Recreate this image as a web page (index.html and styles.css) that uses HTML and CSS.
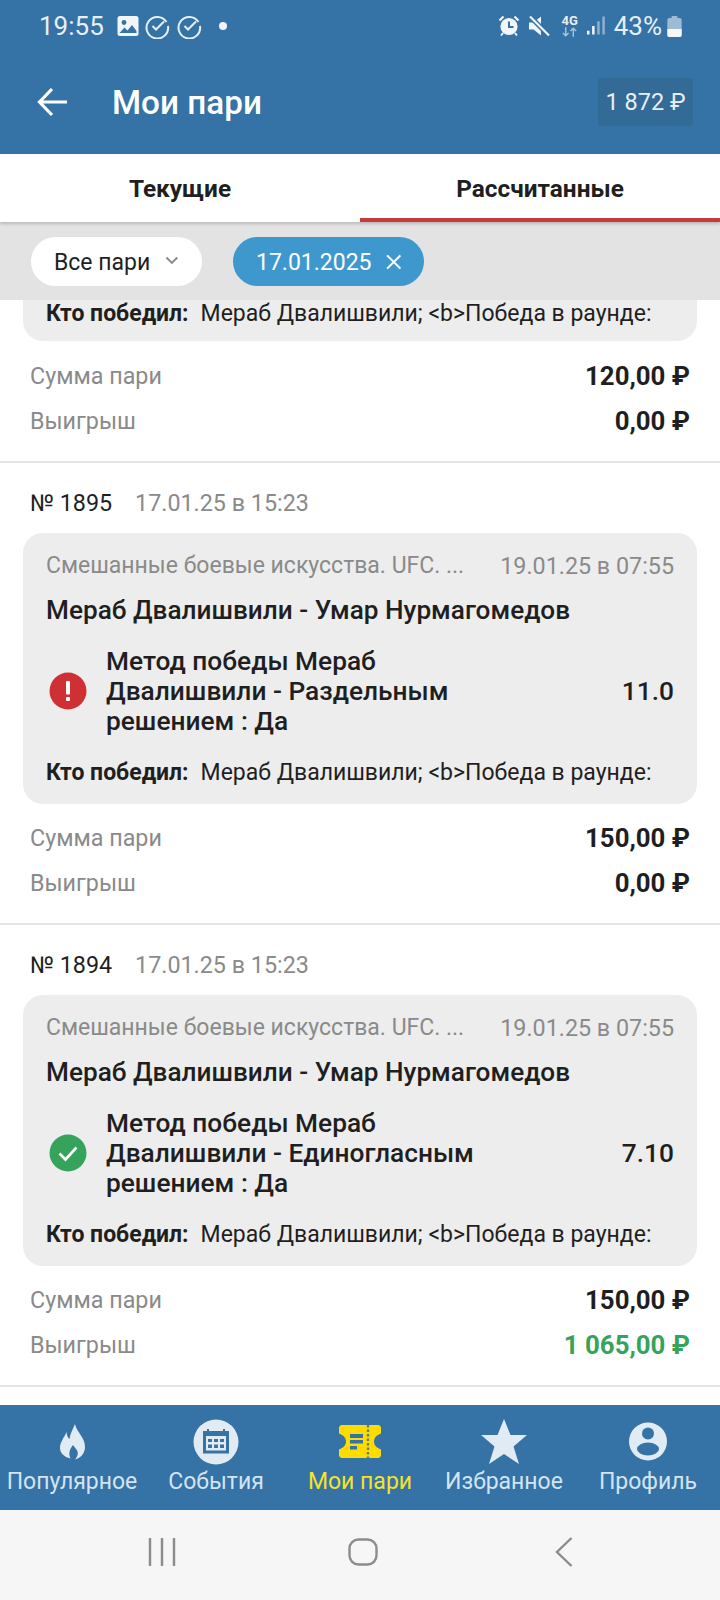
FILE: index.html
```html
<!DOCTYPE html>
<html lang="ru">
<head>
    <meta charset="UTF-8">
    <meta name="viewport" content="width=device-width, initial-scale=1.0">
    <title>Мои пари</title>
    <link rel="stylesheet" href="styles.css">
</head>
<body>
    <div class="app">
        <header class="top">
            <div class="status">
                <div class="status-left">
                    <span class="clock">19:55</span>
                    <svg class="st-pic" viewBox="0 0 22 22"><rect x="0.5" y="1" width="21" height="20" rx="2.5" fill="#f1f6fa"/><circle cx="7" cy="7.5" r="2.4" fill="#3572a5"/><path d="M2.5 18l5-5.5 3 3 4.5-5.5 4.5 6v2z" fill="#3572a5"/></svg>
                    <svg class="st-check" viewBox="0 0 26 26"><path d="M22.5 9A10.8 10.8 0 1 0 24 13" fill="none" stroke="#e6eff6" stroke-width="2"/><path d="M8.5 13l3.5 3.5 8-8" fill="none" stroke="#e6eff6" stroke-width="2"/></svg>
                    <svg class="st-check" viewBox="0 0 26 26"><path d="M22.5 9A10.8 10.8 0 1 0 24 13" fill="none" stroke="#e6eff6" stroke-width="2"/><path d="M8.5 13l3.5 3.5 8-8" fill="none" stroke="#e6eff6" stroke-width="2"/></svg>
                    <span class="st-dot"></span>
                </div>
                <div class="status-right">
                    <svg class="st-alarm" viewBox="0 0 22 22"><path d="M1.500 5.500l4-4M20.500 5.500l-4-4" stroke="#f1f6fa" stroke-width="2.200" fill="none"/><path d="M5 18l-2 2.500M17 18l2 2.500" stroke="#f1f6fa" stroke-width="2" fill="none"/><circle cx="11" cy="11.500" r="8.600" fill="#f1f6fa"/><path d="M11 6.500v5.500h4.500" stroke="#3572a5" stroke-width="2" fill="none"/></svg>
                    <svg class="st-mute" viewBox="0 0 22 22"><path d="M1 7.500h4.500L13 1.500v19l-7.500-6H1z" fill="#f1f6fa"/><path d="M2 1.500l19 19" stroke="#3572a5" stroke-width="5"/><path d="M2 1.500l19 19" stroke="#f1f6fa" stroke-width="2.200"/></svg>
                    <span class="net">
                        <span class="net-label">4G</span>
                        <svg class="net-arrows" viewBox="0 0 18 10"><path d="M5 0v9M2 6l3 3 3-3" stroke="#a9c5db" stroke-width="1.500" fill="none"/><path d="M13 10V1M10 4l3-3 3 3" stroke="#a9c5db" stroke-width="1.500" fill="none"/></svg>
                    </span>
                    <svg class="st-signal" viewBox="0 0 19 20"><rect x="0" y="15" width="2.600" height="4" fill="#f1f6fa"/><rect x="5.400" y="10" width="2.600" height="9" fill="#f1f6fa"/><rect x="10.800" y="5" width="2.600" height="14" fill="#8fb2cd"/><rect x="16.200" y="0" width="2.600" height="19" fill="#8fb2cd"/></svg>
                    <span class="battery-text">43%</span>
                    <svg class="st-batt" viewBox="0 0 15 22"><path d="M4.500 0h6v2h2.500a2 2 0 0 1 2 2v16a2 2 0 0 1-2 2H2a2 2 0 0 1-2-2V4a2 2 0 0 1 2-2h2.500z" fill="#9dbcd4"/><path d="M0 13.500h15V20a2 2 0 0 1-2 2H2a2 2 0 0 1-2-2z" fill="#f4f8fb"/></svg>
                </div>
            </div>
            <div class="toolbar">
                <svg class="back" viewBox="0 0 32 30"><path d="M30 15H3M15 2L2.500 15 15 28" fill="none" stroke="#fff" stroke-width="3.200"/></svg>
                <h1 class="page-title">Мои пари</h1>
                <div class="balance">1 872 ₽</div>
            </div>
        </header>

        <nav class="tabs">
            <div class="tab">Текущие</div>
            <div class="tab tab-active">Рассчитанные</div>
        </nav>

        <div class="filters">
            <div class="chip chip-white">Все пари
                <svg class="chev" viewBox="0 0 14 9"><path d="M1.500 1.500L7 7l5.500-5.500" fill="none" stroke="#8a8a8a" stroke-width="2"/></svg>
            </div>
            <div class="chip chip-blue">17.01.2025
                <svg class="cross" viewBox="0 0 14 14"><path d="M1 1l12 12M13 1L1 13" fill="none" stroke="#fff" stroke-width="1.800"/></svg>
            </div>
        </div>

        <main class="list">
            <section class="bet bet-cut">
                <div class="card card-cut">
                    <p class="who"><b>Кто победил:</b>Мераб Двалишвили; &lt;b&gt;Победа в раунде:</p>
                </div>
                <div class="sums">
                    <div class="sum-row"><span>Сумма пари</span><b>120,00 ₽</b></div>
                    <div class="sum-row"><span>Выигрыш</span><b>0,00 ₽</b></div>
                </div>
            </section>

            <section class="bet">
                <div class="bet-head"><span class="bet-no">№ 1895</span><span class="bet-date">17.01.25 в 15:23</span></div>
                <div class="card">
                    <div class="card-meta"><span class="league">Смешанные боевые искусства. UFC. ...</span><span class="event-date">19.01.25 в 07:55</span></div>
                    <div class="card-title">Мераб Двалишвили - Умар Нурмагомедов</div>
                    <div class="pick">
                        <svg class="pick-icon" viewBox="0 0 38 38"><circle cx="19" cy="19" r="18.500" fill="#cf3033"/><rect x="17" y="9" width="4" height="13.500" rx="1" fill="#fff"/><rect x="17" y="25" width="4" height="4" rx="1" fill="#fff"/></svg>
                        <div class="pick-name">Метод победы Мераб Двалишвили - Раздельным решением : Да</div>
                        <div class="pick-odd">11.0</div>
                    </div>
                    <p class="who"><b>Кто победил:</b>Мераб Двалишвили; &lt;b&gt;Победа в раунде:</p>
                </div>
                <div class="sums">
                    <div class="sum-row"><span>Сумма пари</span><b>150,00 ₽</b></div>
                    <div class="sum-row"><span>Выигрыш</span><b>0,00 ₽</b></div>
                </div>
            </section>

            <section class="bet">
                <div class="bet-head"><span class="bet-no">№ 1894</span><span class="bet-date">17.01.25 в 15:23</span></div>
                <div class="card">
                    <div class="card-meta"><span class="league">Смешанные боевые искусства. UFC. ...</span><span class="event-date">19.01.25 в 07:55</span></div>
                    <div class="card-title">Мераб Двалишвили - Умар Нурмагомедов</div>
                    <div class="pick">
                        <svg class="pick-icon" viewBox="0 0 38 38"><circle cx="19" cy="19" r="18.500" fill="#35a35a"/><path d="M10.500 19.500l6 6 11-12" fill="none" stroke="#fff" stroke-width="2.600"/></svg>
                        <div class="pick-name">Метод победы Мераб Двалишвили - Единогласным решением : Да</div>
                        <div class="pick-odd">7.10</div>
                    </div>
                    <p class="who"><b>Кто победил:</b>Мераб Двалишвили; &lt;b&gt;Победа в раунде:</p>
                </div>
                <div class="sums">
                    <div class="sum-row"><span>Сумма пари</span><b>150,00 ₽</b></div>
                    <div class="sum-row"><span>Выигрыш</span><b class="won">1 065,00 ₽</b></div>
                </div>
            </section>
        </main>

        <nav class="bottom">
            <div class="nav-item">
                <svg class="nav-icon" viewBox="0 0 46 46"><path d="M26 5C28 14 36 18 36 28C36 34 32 39 26 40.500C29 37 30 33 27 30L24 26C21 30 19 34 21.500 39.500C15 38 11 34 11 29C11 23 15 19 17.500 13C18 17 19 19 20.500 20C21 15 24 10 26 5z" fill="#e1ebf4"/></svg>
                <span>Популярное</span>
            </div>
            <div class="nav-item">
                <svg class="nav-icon" viewBox="0 0 46 46"><circle cx="23" cy="23" r="22.500" fill="#e1ebf4"/><path d="M10 12h4v-2h2v2h14v-2h2v2h4v22.500H10z" fill="#3572a5"/><rect x="13" y="17" width="20" height="14.500" fill="#e1ebf4"/><path d="M15 20h4v3h-4zM21 20h4v3h-4zM27 20h4v3h-4zM15 25.500h4V29h-4zM21 25.500h4V29h-4zM27 25.500h4V29h-4z" fill="#3572a5"/></svg>
                <span>События</span>
            </div>
            <div class="nav-item nav-active">
                <svg class="nav-icon" viewBox="0 0 46 46"><path d="M4 6h38l2 2v6.500c-4.500 1.500-7 4.500-7 8s2.500 6.500 7 8V37l-2 2H4l-2-2v-6.500c4.500-1.500 7-4.500 7-8s-2.500-6.500-7-8V8z" fill="#ffdc00"/><path d="M13 15h13v4H13zM13 21h13v3.500H13zM13 27h7v3.500h-7z" fill="#3572a5"/><path d="M31 6v33" stroke="#5f7f80" stroke-width="2.400" stroke-dasharray="2.500 2"/></svg>
                <span>Мои пари</span>
            </div>
            <div class="nav-item">
                <svg class="nav-icon" viewBox="0 0 46 46"><path d="M23 0l6.500 16H46L32.500 27.500 38 45 23 35 8 45l5.500-17.500L0 16h16.500z" fill="#e1ebf4"/></svg>
                <span>Избранное</span>
            </div>
            <div class="nav-item">
                <svg class="nav-icon" viewBox="0 0 46 46"><circle cx="23" cy="22.500" r="19" fill="#e1ebf4"/><circle cx="23" cy="14.500" r="6" fill="#3572a5"/><ellipse cx="23" cy="30" rx="11" ry="6.500" fill="#3572a5"/></svg>
                <span>Профиль</span>
            </div>
        </nav>

        <div class="sysbar">
            <svg class="sys-recent" viewBox="0 0 28 28"><path d="M2 0v28M14 0v28M26 0v28" stroke="#8c8c8c" stroke-width="2.400"/></svg>
            <svg class="sys-home" viewBox="0 0 30 28"><rect x="1.500" y="1.500" width="27" height="25" rx="9" fill="none" stroke="#8c8c8c" stroke-width="2.400"/></svg>
            <svg class="sys-back" viewBox="0 0 18 30"><path d="M16.500 1L2 15l14.500 14" fill="none" stroke="#8c8c8c" stroke-width="2.400"/></svg>
        </div>
    </div>
</body>
</html>
```

FILE: styles.css
```css
* {
    box-sizing: border-box;
}
body {
    margin: 0;
    font-family: Roboto, "Noto Sans", sans-serif;
    color: #1f1f1f;
    background: #fff;
}
.app {
    width: 720px;
    height: 1600px;
    display: flex;
    flex-direction: column;
    overflow: hidden;
}

/* top */
.top {
    height: 154px;
    background: #3572a5;
    flex: none;
    color: #fff;
}
.status {
    height: 52px;
    padding: 0 38px 0 39px;
    display: flex;
    justify-content: space-between;
    align-items: center;
}
.status-left,
.status-right {
    display: flex;
    align-items: center;
}
.clock {
    font-size: 26px;
    color: #e6eff6;
    margin-right: 13px;
}
.st-pic {
    width: 22px;
    height: 22px;
    margin-right: 5px;
}
.st-check {
    width: 26px;
    height: 26px;
    margin-right: 6px;
}
.st-dot {
    width: 8px;
    height: 8px;
    border-radius: 50%;
    background: #f1f6fa;
    margin-left: 11px;
}
.st-alarm {
    width: 22px;
    height: 22px;
    margin-right: 8px;
}
.st-mute {
    width: 22px;
    height: 22px;
    margin-right: 11px;
}
.net {
    width: 18px;
    display: flex;
    flex-direction: column;
    align-items: center;
    margin-right: 8px;
}
.net-label {
    font-size: 13px;
    font-weight: 700;
    line-height: 12px;
    color: #e6eff6;
}
.net-arrows {
    width: 17px;
    height: 10px;
}
.st-signal {
    width: 18px;
    height: 20px;
    margin-right: 9px;
}
.battery-text {
    font-size: 26px;
    color: #e6eff6;
    margin-right: 5px;
}
.st-batt {
    width: 15px;
    height: 21px;
}
.toolbar {
    height: 102px;
    padding: 0 27px 2px 37px;
    display: flex;
    align-items: center;
}
.back {
    width: 32px;
    height: 30px;
    margin-right: 43px;
}
.page-title {
    margin: 0;
    font-size: 33.3px;
    font-weight: 500;
    flex: 1;
}
.balance {
    height: 48px;
    width: 95px;
    display: flex;
    align-items: center;
    justify-content: center;
    background: #346a96;
    border-radius: 3px;
    font-size: 23.5px;
    color: #e6eff6;
}

/* tabs and filters */
.tabs {
    height: 68px;
    flex: none;
    display: flex;
    background: #fff;
    box-shadow: 0 2px 3px rgba(0,0,0,0.18);
    position: relative;
}
.tab {
    flex: 1;
    display: flex;
    align-items: center;
    justify-content: center;
    font-size: 24.4px;
    font-weight: 700;
}
.tab-active {
    box-shadow: inset 0 -4px 0 #c73a3a;
}
.filters {
    height: 78px;
    flex: none;
    background: #e3e3e3;
    display: flex;
    align-items: center;
    padding: 0 31px;
    gap: 31px;
}
.chip {
    height: 49px;
    border-radius: 25px;
    display: flex;
    align-items: center;
    font-size: 23px;
    padding: 2px 23px 0;
    white-space: nowrap;
}
.chip-white {
    background: #fff;
    width: 171px;
}
.chip-blue {
    background: #3f98cd;
    color: #fff;
    width: 191px;
}
.chev {
    width: 14px;
    height: 9px;
    margin-left: 15px;
    margin-bottom: 3px;
}
.cross {
    width: 16px;
    height: 16px;
    margin-left: 14px;
}

/* bets */
.list {
    flex: 1;
    min-height: 0;
    overflow: hidden;
    background: #fff;
}
.bet {
    border-bottom: 2px solid #e5e5e5;
    padding-bottom: 18px;
}
.bet-cut {
    height: 163px;
}
.bet-head {
    height: 70px;
    padding: 9px 30px 0;
    display: flex;
    align-items: center;
    font-size: 23.3px;
}
.bet-date {
    color: #8a8a8a;
    margin-left: 23px;
}
.card {
    background: #ededed;
    border-radius: 20px;
    margin: 0 23px;
    padding: 0 23px;
}
.card-cut {
    height: 41px;
    border-radius: 0 0 20px 20px;
}
.card-meta {
    height: 62px;
    padding-top: 3px;
    display: flex;
    justify-content: space-between;
    align-items: center;
    font-size: 23px;
    color: #8a8a8a;
}
.league {
    flex: 1;
    margin-right: 20px;
    white-space: nowrap;
}
.event-date {
    font-size: 23.3px;
}
.card-title {
    font-size: 26.2px;
    font-weight: 500;
    line-height: 30px;
}
.pick {
    display: flex;
    align-items: center;
    margin-top: 21px;
}
.pick-icon {
    width: 38px;
    height: 38px;
    margin-left: 3px;
    flex: none;
}
.pick-name {
    width: 370px;
    margin-left: 19px;
    font-size: 26.3px;
    font-weight: 500;
    line-height: 30px;
}
.pick-odd {
    margin-left: auto;
    font-size: 26.3px;
    font-weight: 500;
}
.who {
    margin: 22px 0 0;
    height: 46px;
    font-size: 23px;
    line-height: 30px;
    white-space: nowrap;
}
.card-cut .who {
    margin: 0;
    height: 27px;
    line-height: 27px;
}
.who b {
    font-weight: 700;
    margin-right: 12px;
}
.sums {
    padding: 11px 30px 0;
}
.card-cut + .sums {
    padding-top: 12px;
}
.sum-row {
    height: 45px;
    display: flex;
    justify-content: space-between;
    align-items: center;
    font-size: 23.3px;
    color: #8a8a8a;
}
.sum-row b {
    font-size: 25.8px;
    font-weight: 700;
    color: #1f1f1f;
}
.sum-row b.won {
    color: #35a35a;
}

/* bottom nav */
.bottom {
    height: 105px;
    flex: none;
    background: #3572a5;
    display: flex;
    color: #d3e4f2;
    font-size: 23px;
}
.nav-item {
    flex: 1;
    display: flex;
    flex-direction: column;
    align-items: center;
    padding-top: 14px;
    white-space: nowrap;
}
.nav-icon {
    width: 46px;
    height: 46px;
    margin-bottom: 3px;
}
.nav-active {
    color: #f5e22a;
}
.sysbar {
    height: 90px;
    flex: none;
    background: #f6f6f6;
    display: flex;
    align-items: center;
    justify-content: space-between;
    padding: 0 147px 6px 148px;
}
.sys-recent {
    width: 28px;
    height: 28px;
}
.sys-home {
    width: 30px;
    height: 28px;
    margin-right: 6px;
}
.sys-back {
    width: 18px;
    height: 30px;
}
```
